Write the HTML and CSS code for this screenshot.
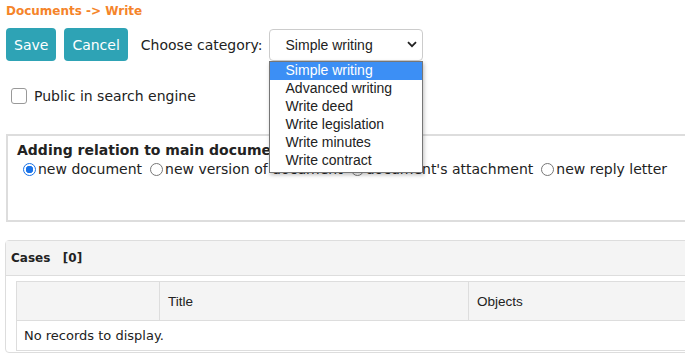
FILE: index.html
```html
<!DOCTYPE html>
<html lang="en">
<head>
    <meta charset="UTF-8">
    <title>Documents - Write</title>
    <link rel="stylesheet" href="styles.css">
</head>
<body>
    <div class="page">
        <div class="breadcrumb">Documents -&gt; Write</div>

        <div class="toolbar">
            <button class="btn">Save</button>
            <button class="btn">Cancel</button>
            <span class="label">Choose category:</span>
            <div class="select-wrap">
                <div class="select">
                    <span>Simple writing</span>
                    <svg class="chevron" width="10" height="7" viewBox="0 0 10 7">
                        <path d="M1 1.2 L5 5.2 L9 1.2" fill="none" stroke="#222" stroke-width="1.8"/>
                    </svg>
                </div>
                <ul class="options">
                    <li class="active">Simple writing</li>
                    <li>Advanced writing</li>
                    <li>Write deed</li>
                    <li>Write legislation</li>
                    <li>Write minutes</li>
                    <li>Write contract</li>
                </ul>
            </div>
        </div>

        <label class="check">
            <span class="box"></span>
            Public in search engine
        </label>

        <div class="relation">
            <div class="relation-title">Adding relation to main document</div>
            <div class="radios">
                <span class="radio checked"></span>new document
                <span class="radio"></span>new version of document
                <span class="radio"></span>document's attachment
                <span class="radio"></span>new reply letter
            </div>
        </div>

        <div class="cases">
            <div class="cases-head">Cases&nbsp;&nbsp; [0]</div>
            <div class="cases-body">
                <table class="grid">
                    <tr>
                        <th class="col-first"></th>
                        <th class="col-title">Title</th>
                        <th>Objects</th>
                    </tr>
                    <tr>
                        <td colspan="3">No records to display.</td>
                    </tr>
                </table>
            </div>
        </div>
    </div>
</body>
</html>
```

FILE: styles.css
```css
body {
    margin: 0;
    overflow: hidden;
    font-family: "DejaVu Sans", Verdana, sans-serif;
    color: #222;
    background: #fff;
}

.page {
    width: 760px;
    padding: 4px 0 0 6px;
}

.breadcrumb {
    color: #f5842a;
    font-weight: bold;
    font-size: 12px;
    height: 20px;
}

.toolbar {
    display: flex;
    align-items: center;
    margin-top: 4px;
}

.btn {
    background-color: #2ea3b5;
    color: #fff;
    border: none;
    border-radius: 4px;
    height: 33px;
    padding: 0 8px;
    font-family: "DejaVu Sans", Verdana, sans-serif;
    font-size: 14px;
    margin-right: 8px;
}

.label {
    font-size: 14px;
    margin-left: 5px;
    margin-right: 6px;
}

.select-wrap {
    position: relative;
}

.select {
    width: 154px;
    height: 32px;
    border: 1px solid #ccc;
    border-radius: 4px;
    display: flex;
    align-items: center;
    justify-content: space-between;
    padding: 0 5px 0 16px;
    box-sizing: border-box;
    font-family: "Liberation Sans", Arial, sans-serif;
    font-size: 14px;
}

.options {
    position: absolute;
    left: 0;
    top: 32px;
    width: 154px;
    box-sizing: border-box;
    margin: 0;
    padding: 0 0 2px 0;
    list-style: none;
    background: #fff;
    border: 1px solid #767676;
    box-shadow: 1px 2px 4px rgba(0, 0, 0, 0.25);
    font-family: "Liberation Sans", Arial, sans-serif;
    font-size: 14px;
    color: #222;
    z-index: 5;
}

.options li {
    height: 18px;
    line-height: 17px;
    padding-left: 16px;
}

.options li.active {
    background: #3c8ff5;
    color: #fff;
}

.check {
    display: flex;
    align-items: center;
    gap: 7px;
    margin: 27px 0 0 5px;
    font-size: 14px;
}

.box {
    width: 14px;
    height: 14px;
    border: 1px solid #999;
    border-radius: 3px;
}

.relation {
    margin-top: 30px;
    border: 2px solid #ddd;
    border-right: none;
    padding: 6px 0 0 9px;
    box-sizing: border-box;
    height: 88px;
}

.relation-title {
    font-weight: bold;
    font-size: 14px;
}

.radios {
    font-size: 14px;
    margin: 3px 0 0 6px;
    display: flex;
    align-items: center;
}

.radio {
    width: 13px;
    height: 13px;
    border: 1px solid #777;
    border-radius: 50%;
    margin: 0 2px 0 8px;
    display: inline-block;
    box-sizing: border-box;
}

.radio:first-child {
    margin-left: 0;
}

.radio.checked {
    border-color: #1a73e8;
    background: radial-gradient(circle, #1a73e8 0 3.5px, #fff 4px);
}

.cases {
    margin: 18px 0 0 -1px;
    border: 1px solid #ddd;
    border-radius: 4px;
}

.cases-head {
    background: #f4f4f4;
    height: 34px;
    line-height: 34px;
    padding-left: 5px;
    font-family: "DejaVu Sans", Verdana, sans-serif;
    font-weight: bold;
    font-size: 12px;
    border-bottom: 1px solid #ddd;
}

.cases-body {
    padding: 5px 0 1px 10px;
}

.grid {
    width: 100%;
    border-collapse: collapse;
    border: 1px solid #ddd;
}

.grid th {
    background: #f4f4f4;
    height: 38px;
    text-align: left;
    font-family: "Liberation Sans", Arial, sans-serif;
    font-weight: normal;
    font-size: 13.5px;
    padding: 0 8px;
    border-left: 1px solid #ddd;
    border-bottom: 1px solid #ddd;
}

.grid th.col-first {
    width: 126px;
}

.grid th.col-title {
    width: 292px;
}

.grid td {
    height: 29px;
    font-size: 13px;
    padding: 0 7px;
}
```
